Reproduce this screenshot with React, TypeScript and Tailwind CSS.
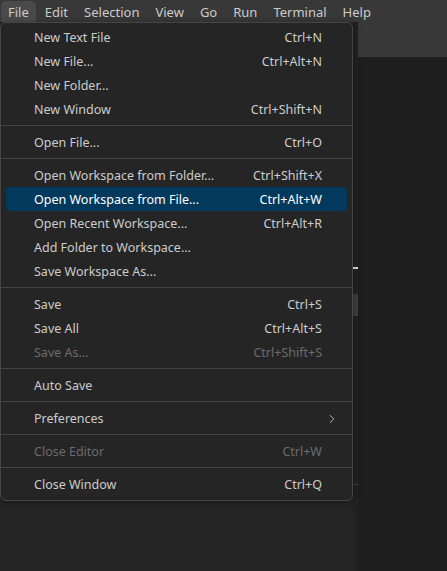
import { ChevronRight } from 'lucide-react'

type Item = { label: string; keys?: string; disabled?: boolean; active?: boolean; sub?: boolean }

const groups: Item[][] = [
  [
    { label: 'New Text File', keys: 'Ctrl+N' },
    { label: 'New File...', keys: 'Ctrl+Alt+N' },
    { label: 'New Folder...' },
    { label: 'New Window', keys: 'Ctrl+Shift+N' },
  ],
  [{ label: 'Open File...', keys: 'Ctrl+O' }],
  [
    { label: 'Open Workspace from Folder...', keys: 'Ctrl+Shift+X' },
    { label: 'Open Workspace from File...', keys: 'Ctrl+Alt+W', active: true },
    { label: 'Open Recent Workspace...', keys: 'Ctrl+Alt+R' },
    { label: 'Add Folder to Workspace...' },
    { label: 'Save Workspace As...' },
  ],
  [
    { label: 'Save', keys: 'Ctrl+S' },
    { label: 'Save All', keys: 'Ctrl+Alt+S' },
    { label: 'Save As...', keys: 'Ctrl+Shift+S', disabled: true },
  ],
  [{ label: 'Auto Save' }],
  [{ label: 'Preferences', sub: true }],
  [{ label: 'Close Editor', keys: 'Ctrl+W', disabled: true }],
  [{ label: 'Close Window', keys: 'Ctrl+Q' }],
]

const menus = ['File', 'Edit', 'Selection', 'View', 'Go', 'Run', 'Terminal', 'Help']

function MenuRow({ item }: { item: Item }) {
  const color = item.disabled ? 'text-[#6b6b6b]' : item.active ? 'text-white' : 'text-[#cccccc]'
  return (
    <div
      className={`mx-[5px] h-6 pt-[2px] flex items-center pl-[28px] pr-[25px] rounded-[4px] ${color} ${
        item.active ? 'bg-[#04395e]' : ''
      }`}
    >
      <span className="flex-1 whitespace-nowrap">{item.label}</span>
      {item.keys && <span className="whitespace-nowrap">{item.keys}</span>}
      {item.sub && <ChevronRight size={14} strokeWidth={1.5} className="-mr-[17px] text-[#cccccc]" />}
    </div>
  )
}

export default function App() {
  return (
    <div
      className="relative w-[447px] h-[571px] overflow-hidden bg-[#252526] text-[12.5px]"
      style={{ fontFamily: '"Noto Sans", sans-serif' }}
    >
      {/* menu bar */}
      <div className="h-[22px] bg-[#383838] flex items-end pl-px text-[#cccccc] text-[13px]">
        {menus.map(m => (
          <div
            key={m}
            className={`h-[21px] pt-[2px] px-[7px] mr-[2px] flex items-center rounded-t-[5px] ${
              m === 'File' ? 'bg-[#4a4a4a]' : ''
            }`}
          >
            {m}
          </div>
        ))}
      </div>

      {/* workbench */}
      <div className="flex h-[549px]">
        <div className="w-[353px] bg-[#252526]" />
        <div className="relative w-[5px] bg-[#222222]">
          <div className="absolute top-[245px] left-0 w-[5px] h-[2px] bg-[#e0e0e0]" />
          <div className="absolute top-[272px] left-0 w-[5px] h-[22px] bg-[#3e3e45]" />
          <div className="absolute top-[462px] left-0 w-[5px] h-px bg-[#454545]" />
        </div>
        <div className="flex-1 flex flex-col">
          <div className="h-[35px] bg-[#383838]" />
          <div className="flex-1 bg-[#1e1e1e]" />
        </div>
      </div>

      {/* File menu */}
      <div className="absolute top-[22px] left-0 w-[353px] bg-[#252526] border border-[#454545] rounded-[6px] pt-[2px] pb-[4px] shadow-[0_2px_8px_rgba(0,0,0,0.36)]">
        {groups.map((g, i) => (
          <div key={i}>
            {i > 0 && <div className="my-[4px] h-px bg-[#454545]" />}
            {g.map(item => (
              <MenuRow key={item.label} item={item} />
            ))}
          </div>
        ))}
      </div>
    </div>
  )
}
